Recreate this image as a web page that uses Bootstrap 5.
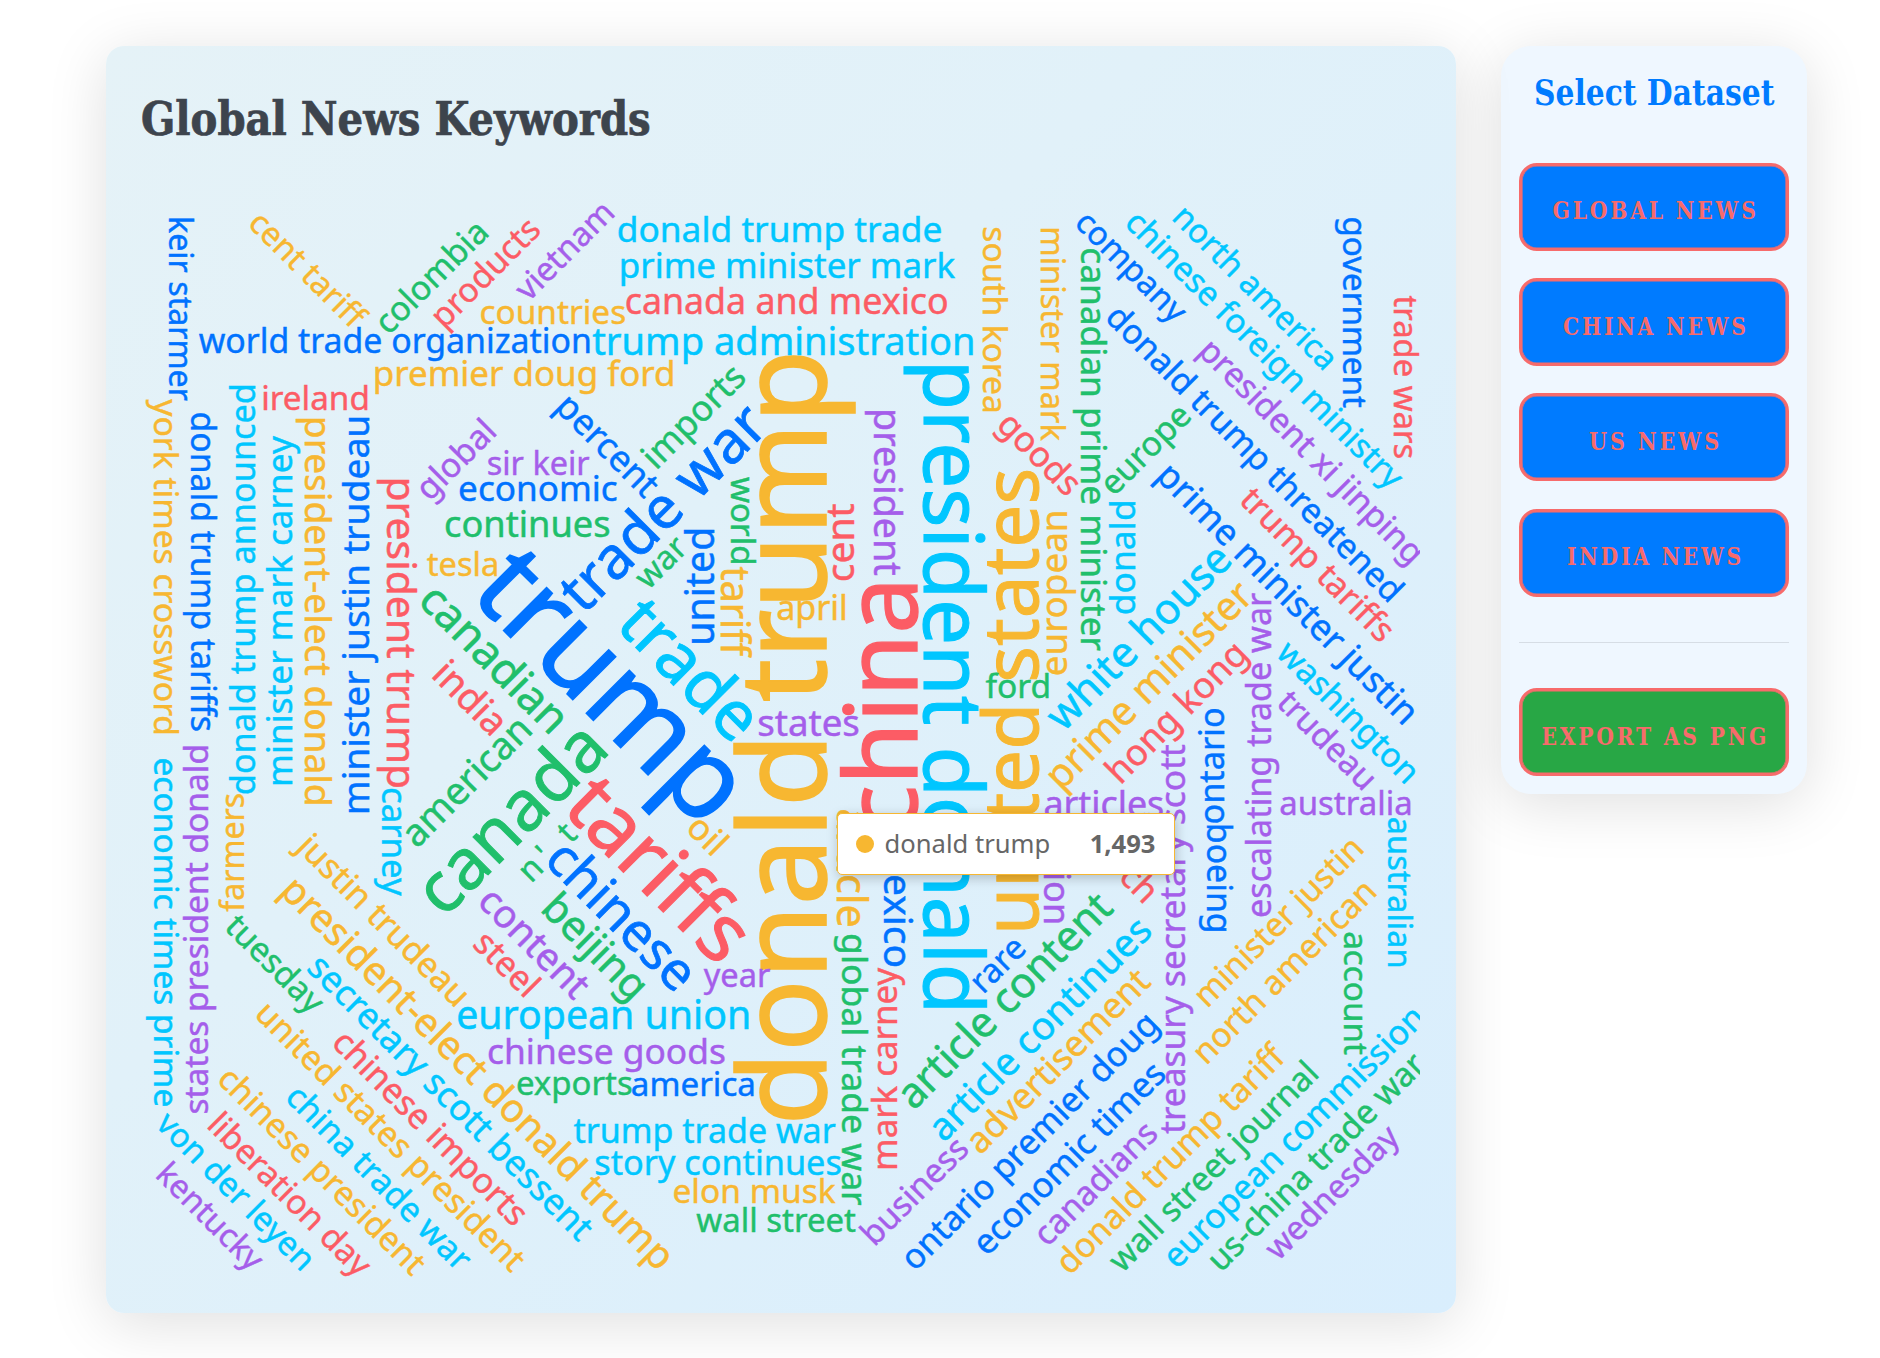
<!DOCTYPE html>
<html lang="en">
<head>
<meta charset="utf-8">
<meta name="viewport" content="width=device-width, initial-scale=1">
<title>Global News Keywords</title>
<link href="https://cdn.jsdelivr.net/npm/bootstrap@5.3.0/dist/css/bootstrap.min.css" rel="stylesheet">
<style>
  body { background: #fff; height: 1358px; overflow: hidden; font-family: "Noto Sans", sans-serif; }
  .page-wrap { padding: 46px 73px 0 106px; gap: 45px; }
  .slab { font-family: "DejaVu Serif Condensed", "DejaVu Serif", serif; font-stretch: condensed; font-weight: 700; white-space: nowrap; }
  .cloud-card { width: 1350px; height: 1267px; padding: 36px; border: 0; border-radius: 18px; z-index: 1;
    background: linear-gradient(135deg, #e5f2f7 0%, #e1f1f9 40%, #d9eefd 100%); box-shadow: 0 10px 60px rgba(0,0,0,.13); }
  .cloud-title { height: 83px; margin: 0 0 0 -1px; color: #3d444d; font-size: 46px; line-height: 74px; -webkit-text-stroke: .7px #3d444d; }
  .fit { display: inline-block; }
  .cloud-title .fit { transform-origin: 0 50%; }
  .cloud-svg { width: 1278px; height: 1112px; overflow: hidden; font-family: "Noto Sans", sans-serif; font-variant-ligatures: none; }
  .side-panel { width: 306px; height: 748px; padding: 18px; border: 0; border-radius: 30px; background: #eff7ff; box-shadow: 0 10px 60px rgba(0,0,0,.13); }
  .side-title { height: 99px; margin: 0; color: #007bff; font-size: 35px; line-height: 58px; text-align: center; }
  .btn-set { height: 88px; padding: 9px 0 0; border: 3px solid #f76b6b; border-radius: 18px; box-shadow: inset 0 0 0 .6px #f76b6b;
    background: #007bff; color: #f76b6b; font-size: 24px; line-height: 70px; letter-spacing: 3px; }
  .btn-set .fit { margin-right: -3px; }
  .btn-export { background: #28a745; }
  .side-stack { gap: 27.3px; }
  .side-rule { margin: 45px 0 45.5px; border: 0; height: 1px; background: #000; opacity: .1; }
  .tip { position: absolute; left: 730.5px; top: 766.5px; width: 338px; height: 62.5px; padding: 0 18px; background: #fff;
    border: 1.4px solid #f7b731; border-radius: 5px; box-shadow: 1px 3px 12px rgba(0,0,0,.22); color: #666; font-size: 25.6px; line-height: 60px; white-space: nowrap; }
  .tip-dot { width: 18px; height: 18px; border-radius: 50%; background: #f7b731; margin-right: 11px; }
</style>
<script src="https://cdn.jsdelivr.net/npm/bootstrap@5.3.0/dist/js/bootstrap.bundle.min.js"></script>
</head>
<body>
<main class="page-wrap d-flex align-items-start">
  <section class="card cloud-card position-relative flex-shrink-0">
    <h1 class="cloud-title slab"><span class="fit" data-w="510">Global News Keywords</span></h1>
    <svg id="cloud" class="cloud-svg d-block" viewBox="142 165 1278 1112" role="img" aria-label="Word cloud"></svg>
    <div class="tip d-flex align-items-center">
      <span class="tip-dot"></span><span>donald trump</span><strong class="ms-auto">1,493</strong>
    </div>
  </section>
  <aside class="card side-panel flex-shrink-0">
    <h2 class="side-title slab"><span class="fit" data-w="240">Select Dataset</span></h2>
    <div class="d-flex flex-column side-stack">
      <button class="btn btn-set slab w-100"><span class="fit" data-w="206">GLOBAL NEWS</span></button>
      <button class="btn btn-set slab w-100"><span class="fit" data-w="186">CHINA NEWS</span></button>
      <button class="btn btn-set slab w-100"><span class="fit" data-w="133">US NEWS</span></button>
      <button class="btn btn-set slab w-100"><span class="fit" data-w="177">INDIA NEWS</span></button>
    </div>
    <hr class="side-rule">
    <button class="btn btn-set btn-export slab w-100"><span class="fit" data-w="228">EXPORT AS PNG</span></button>
  </aside>
</main>
<script>
const palette = { B: '#0072ff', C: '#00c6ff', O: '#f7b731', R: '#fc5c65', G: '#20bf6b', P: '#a55eea' };
// [text, colour, angle, baseline offset, start along the text, end along the text, fixed size]
// angle 0: y, x, x; 90 / -90: x, y, y; 45: y-x, x+y, x+y; -45: x+y, x-y, x-y
const words = [
 ['donald trump','O',-90,825.7,1119,356],['trump','B',45,127,1065,1526],['president donald','C',90,924,366.7,1007.3],
 ['china','R',-90,917,828,585.3],['tariffs','R',45,249,1372,1682],['canada','G',-45,1363,-470,-147],
 ['united states','O',-90,1038.3,929.3,471],['trade','C',45,12,1242,1475],['trade war','B',-45,1199,-31,341],
 ['chinese','B',45,319,1408,1667],
 ['donald trump trade','C',0,242.3,618.7,940.7],['prime minister mark','C',0,278,621.7,955],
 ['canada and mexico','R',0,314.3,626.7,947],['countries','O',0,324,481.3,624.7],
 ['world trade organization','B',0,352.7,199,589.3],['trump administration','C',0,355,592.7,972.7],
 ['premier doug ford','O',0,386,375.7,672.7],['ireland','R',0,409.7,263.7,367],
 ['sir keir','P',0,475,488.3,589.3],['economic','B',0,501,460,616.7],['continues','G',0,537,446,609],
 ['tesla','O',0,576,427.3,496.7],['april','O',0,620.3,777.7,845],['states','P',0,736.3,759,858.3],
 ['ford','G',0,697.7,986,1048.3],['articles','P',0,816.7,1045,1162.7],['australia','P',0,814.7,1280.7,1410],
 ['year','P',0,986.7,703.7,770],['european union','C',0,1028.7,458.3,748.3],['chinese goods','P',0,1063.7,489,724.3],
 ['exports','G',0,1095,517.7,631.3],['america','B',0,1095.7,632.3,753.3],['trump trade war','C',0,1143,574,835.3],
 ['story continues','C',0,1174.7,596,840.3],['elon musk','O',0,1202.7,674.3,835.3],['wall street','G',0,1231.7,696.7,855.3],
 ['keir starmer','B',90,169.3,218.7,400.7],['york times crossword','O',90,154.3,399.3,733.3],
 ['economic times prime','C',90,154.3,759.3,1105.7],['donald trump tariffs','B',90,190.7,413.3,730.7],
 ['president-elect donald','O',90,305,419,803.6],['president trump','R',90,386.7,480,787],
 ['carney','C',90,382,789,895.7],['world','G',90,731,477.3,562.8],['tariff','O',90,720.7,567,658],
 ['president','P',90,874.3,411.3,575],['south korea','O',90,982.7,228,411],['minister mark','O',90,1041,229,440.7],
 ['canadian prime minister','G',90,1081,249.3,650.7],['government','B',90,1343.3,218.3,407.3],
 ['trade wars','R',90,1394.3,296,457.7],['boeing','B',90,1206.7,825.7,930.7],['ontario','B',-90,1224.3,822.7,709],
 ['australian','C',90,1387.7,818.3,966],['account','G',90,1344,932.7,1054.3],['article','O',90,837.3,810,925.7],
 ['global trade war','G',90,841.7,935,1205.3],['mexico','B',90,884,841,966],['union','P',90,1044.3,830,922.3],
 ['donald trump announced','C',-90,255.3,793.3,386],['minister mark carney','C',-90,292,784,436],
 ['minister justin trudeau','B',-90,368.7,812,417.7],['states president donald','P',-90,208.3,1112.9,746.7],
 ['farmers','O',-90,244,911.4,794.3],['united','B',-90,714.3,642.7,530],['cent','R',-90,854.3,580,504.3],
 ['european','O',-90,1067.3,674.3,512.3],['donald','C',-90,1135,613.3,502.3],
 ['treasury secretary scott','P',-90,1184.7,1133.3,745],['escalating trade war','P',-90,1271,916,593.3],
 ['mark carney','R',-90,896.7,1168,967.7],
 ['cent tariff','O',45,-22,474,684],['percent','B',45,-145,966,1143],['canadian','G',45,185.7,1022,1283],
 ['india','R',45,246,1110,1226],['content','P',45,427,1382,1574],['beijing','G',45,371,1454,1630],
 ['steel','R',45,474,1419,1521],['justin trudeau','O',45,553,1141,1461],
 ['president-elect donald trump','O',45,614,1175,1928],['secretary scott bessent','C',45,664,1277,1820],
 ['tuesday','G',45,705,1152,1326],['united states president','O',45,762,1272,1784],
 ['chinese imports','R',45,714,1377,1740],['china trade war','C',45,815,1385,1730],
 ['chinese president','O',45,865,1299,1688],['liberation day','R',45,921,1336,1636],
 ['von der leyen','C',45,971,1280,1571],['kentucky','P',45,1022,1334,1523],
 ['company','B',45,-849,1300,1498],['chinese foreign ministry','C',45,-899,1350,1880.7],
 ['north america','C',45,-952,1393,1693],['donald trump threatened','B',45,-785,1425,1990],
 ['president xi jinping','P',45,-844,1553,1973],['prime minister justin','B',45,-677,1636,2127],
 ['trump tariffs','R',45,-736.5,1740,2023],['washington','C',45,-620,1930,2188],['trudeau','P',45,-571,1980,2152],
 ['goods','R',45,-569,1424,1563],['oil','O',45,145,1517,1566.7],['march','R',45,-239,1907,2046],
 ['colombia','G',-45,724.5,55,253],['products','R',-45,774,118,309],['vietnam','P',-45,831,226,399],
 ['global','P',-45,931.7,-70,61.7],['imports','G',-45,1127,189,367],['war','G',-45,1239,58,139],
 ['american','G',-45,1266,-430,-201],["n' t",'G',-45,1415,-349,-259,33],
 ['white house','C',-45,1796,331,670],['prime minister','O',-45,1853,274,657],['hong kong','R',-45,1906,339,590],
 ['europe','G',-45,1611,619,773.5],['rare','B',-45,1978,-8,76],['article content','G',-45,2025,-195,204],
 ['article continues','C',-45,2087,-197,219],['advertisement','O',-45,2136,-173,168],['business','P',-45,2121.7,-369.3,-182],
 ['ontario premier doug','B',-45,2187,-355,131],['economic times','B',-45,2244,-268,90],
 ['canadians','P',-45,2295,-198,22.5],['donald trump tariff','O',-45,2346,-204,230],
 ['wall street journal','G',-45,2396,-151,241.7],['european commission','C',-45,2447,-91,404],
 ['us-china trade war','G',-45,2494,-49,360],['wednesday','P',-45,2540,17,262],
 ['minister justin','O',-45,2216,202,512],['north american','O',-45,2272,144,481.7]
];
const svg = document.getElementById('cloud');
const pen = document.createElement('canvas').getContext('2d');
pen.font = '200px "Noto Sans"';
for (const [text, colour, angle, k, a, b, fixed] of words) {
  const m = pen.measureText(text);
  const left = -m.actualBoundingBoxLeft / 200, ink = m.actualBoundingBoxRight / 200 - left;
  const diagonal = Math.abs(angle) === 45;
  const len = Math.abs(b - a) / (diagonal ? Math.SQRT2 : 1);
  const size = fixed || len / ink;
  let x = a, y = k;
  if (angle === 90 || angle === -90) { x = k; y = a; }
  if (angle === 45) { x = (a - k) / 2; y = (a + k) / 2; }
  if (angle === -45) { x = (k + a) / 2; y = (k - a) / 2; }
  const t = document.createElementNS('http://www.w3.org/2000/svg', 'text');
  t.setAttribute('transform', `translate(${x.toFixed(1)} ${y.toFixed(1)}) rotate(${angle})`);
  t.setAttribute('x', (-left * size).toFixed(2));
  t.setAttribute('font-size', size.toFixed(2));
  t.setAttribute('fill', palette[colour]);
  t.setAttribute('stroke', palette[colour]);
  t.setAttribute('stroke-width', (size * .013).toFixed(2));
  if (fixed) t.setAttribute('textLength', (len + size * .12).toFixed(1));
  t.textContent = text;
  svg.appendChild(t);
}
for (const el of document.querySelectorAll('.fit')) {
  el.style.transform = `scaleX(${el.dataset.w / el.offsetWidth})`;
}
</script>
</body>
</html>
